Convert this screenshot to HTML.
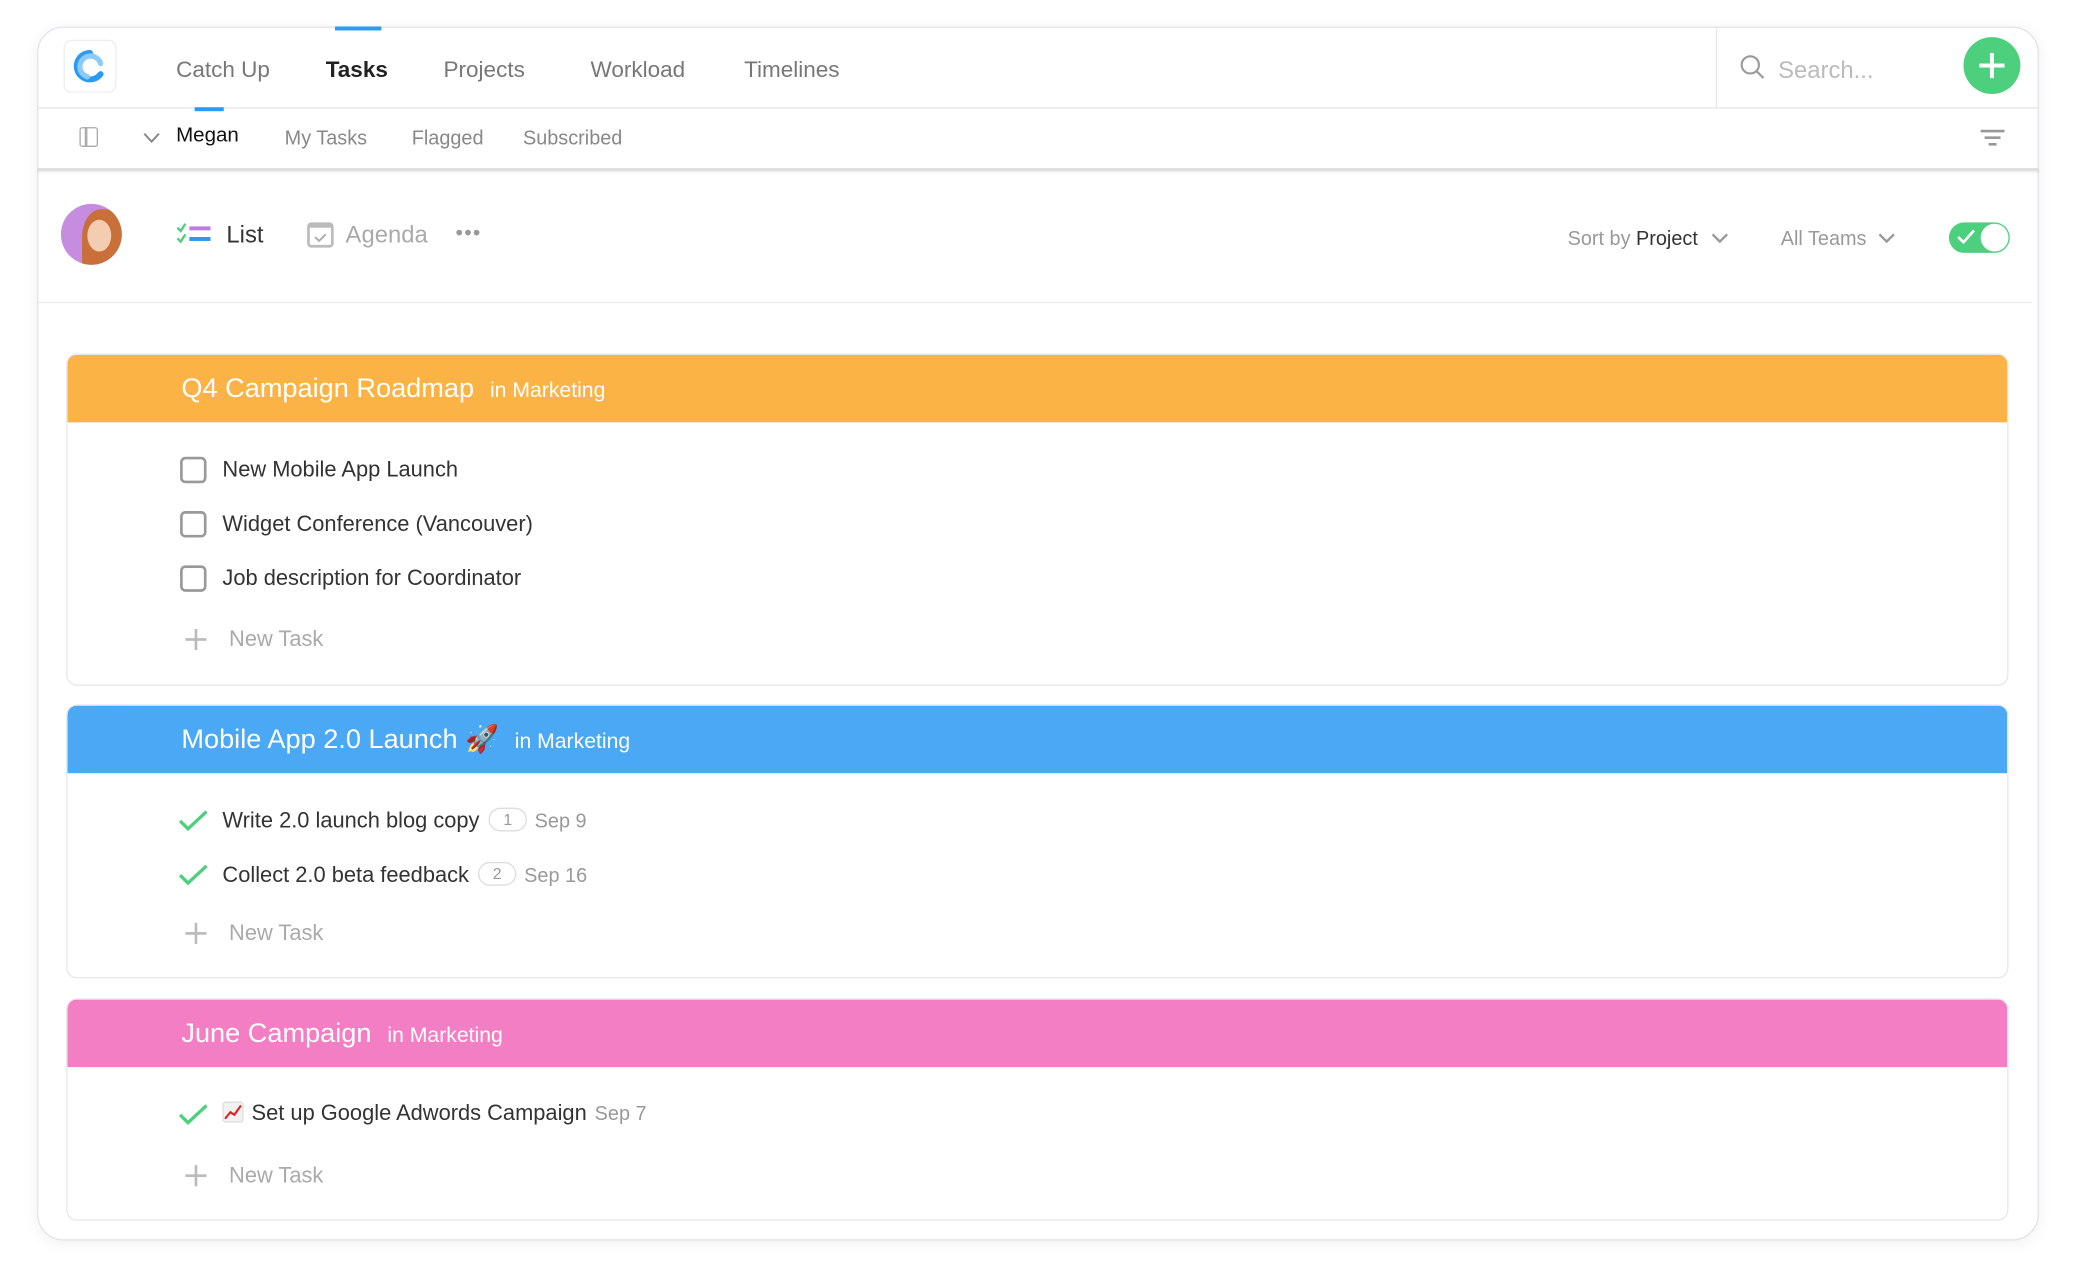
<!DOCTYPE html>
<html><head><meta charset="utf-8"><style>
*{margin:0;padding:0;box-sizing:border-box}
html,body{width:2076px;height:1288px;overflow:hidden;background:#fff}
#w{position:absolute;left:0;top:0;width:1568px;height:973px;transform:scale(1.32398);transform-origin:0 0;font-family:"Liberation Sans",sans-serif}
.a{position:absolute;white-space:nowrap}
.card{left:28px;top:20px;width:1512px;height:917px;border:1px solid #e2e4e7;border-radius:20px;box-shadow:0 2px 12px rgba(0,0,0,.06);background:#fff;overflow:hidden}
.nav{font-size:17px;color:#777;top:43px}
.sub{font-size:15px;color:#888;top:96px}
.sec{left:50px;width:1467px;border:1px solid #e6e8ea;border-radius:8px;overflow:hidden;background:#fff}
.hd{position:absolute;left:0;top:0;width:100%;height:51px}
.hd .t{position:absolute;left:86px;top:14px;font-size:20.5px;color:#fff}
.hd .m{font-size:16px;margin-left:12px}
.task{font-size:16.5px;color:#333;left:168px}
.cb{position:absolute;left:136px;width:20px;height:20px;border:2px solid #999;border-radius:4px}
.nt{font-size:16.5px;color:#aaa;left:173px}
.pl{position:absolute;left:140px;width:16px;height:16px}
.pl:before,.pl:after{content:"";position:absolute;background:#bbb}
.pl:before{left:7px;top:0;width:1.5px;height:16px}.pl:after{top:7px;left:0;height:1.5px;width:16px}
.dt{color:#999;font-size:15px;margin-left:6px}
.bub{display:inline-block;border:1.5px solid #ddd;border-radius:11px;font-size:12px;color:#999;padding:1px 10px;margin-left:7px;vertical-align:2px}
</style></head><body><div id="w">
<div class="a card"></div>
<div class="a" style="left:48px;top:30px;width:40px;height:40px;border:1px solid #eee;border-radius:6px"></div>
<svg class="a" style="left:54px;top:36px" width="28" height="28" viewBox="0 0 28 28"><path d="M14 4a10 10 0 1 0 8 16" fill="none" stroke="#2b9af3" stroke-width="4.5" stroke-linecap="round"/><path d="M12 22a8 8 0 1 1 10-10" fill="none" stroke="#8ccaf9" stroke-width="4" stroke-linecap="round"/></svg>
<div class="a" style="left:253px;top:20px;width:35px;height:3px;background:#2b9af3"></div>
<div class="a nav" style="left:133px">Catch Up</div>
<div class="a nav" style="left:246px;color:#222;font-weight:bold">Tasks</div>
<div class="a nav" style="left:335px">Projects</div>
<div class="a nav" style="left:446px">Workload</div>
<div class="a nav" style="left:562px">Timelines</div>
<div class="a" style="left:1296px;top:20px;width:1px;height:61px;background:#e6e6e6"></div>
<svg class="a" style="left:1314px;top:41px" width="20" height="20" viewBox="0 0 20 20"><circle cx="8" cy="8" r="6.5" fill="none" stroke="#999" stroke-width="1.6"/><path d="M13 13l5 5" stroke="#999" stroke-width="1.6"/></svg>
<div class="a" style="left:1343px;top:43px;font-size:18px;color:#bbb">Search...</div>
<div class="a" style="left:1483px;top:28px;width:43px;height:43px;border-radius:50%;background:#4cd07d"></div>
<div class="a" style="left:1503px;top:40px;width:3px;height:19px;background:#fff"></div>
<div class="a" style="left:1495px;top:48px;width:19px;height:3px;background:#fff"></div>
<div class="a" style="left:28px;top:81px;width:1512px;height:1px;background:#e6e6e6"></div>
<div class="a" style="left:147px;top:81px;width:22px;height:3px;background:#2b9af3"></div>
<div class="a" style="left:60px;top:96px;width:14px;height:15px;border:1.5px solid #aaa;border-radius:2px"></div>
<div class="a" style="left:64px;top:96px;width:1.5px;height:15px;background:#aaa"></div>
<svg class="a" style="left:108px;top:99px" width="13" height="10" viewBox="0 0 13 10"><path d="M1 2l5.5 6L12 2" fill="none" stroke="#888" stroke-width="1.5"/></svg>
<div class="a sub" style="left:133px;top:94px;color:#111;font-size:15.5px">Megan</div>
<div class="a sub" style="left:215px">My Tasks</div>
<div class="a sub" style="left:311px">Flagged</div>
<div class="a sub" style="left:395px">Subscribed</div>
<div class="a" style="left:1496px;top:98px;width:18px;height:2px;background:#999"></div>
<div class="a" style="left:1499px;top:103px;width:12px;height:2px;background:#999"></div>
<div class="a" style="left:1502px;top:108px;width:6px;height:2px;background:#999"></div>
<div class="a" style="left:28px;top:127px;width:1512px;height:2px;background:#ddd;box-shadow:0 1px 2px rgba(0,0,0,.1)"></div>
<div class="a" style="left:46px;top:154px;width:46px;height:46px;border-radius:50%;background:#c58ce0;overflow:hidden"><div style="position:absolute;left:16px;top:4px;width:32px;height:46px;border-radius:45% 45% 10% 10%;background:#c9703a"></div><div style="position:absolute;left:20px;top:12px;width:18px;height:24px;border-radius:50%;background:#f4cdb0"></div></div>
<svg class="a" style="left:133px;top:168px" width="28" height="18" viewBox="0 0 28 18"><path d="M1 4l2.5 2.5L7 1M1 12l2.5 2.5L7 9" fill="none" stroke="#4cd07d" stroke-width="1.8"/><rect x="10" y="3" width="16" height="3" fill="#c07be0"/><rect x="10" y="11" width="16" height="3" fill="#2b9af3"/></svg>
<div class="a" style="left:171px;top:167px;font-size:18px;color:#333">List</div>
<div class="a" style="left:232px;top:168px;width:20px;height:19px;border:2px solid #bbb;border-top-width:4px;border-radius:3px"></div>
<svg class="a" style="left:236px;top:175px" width="12" height="9" viewBox="0 0 12 9"><path d="M2 4l3 3 5-5" fill="none" stroke="#aaa" stroke-width="1.4"/></svg>
<div class="a" style="left:261px;top:167px;font-size:18px;color:#aaa">Agenda</div>
<div class="a" style="left:344px;top:168px;font-size:16px;color:#999;letter-spacing:1px">•••</div>
<div class="a" style="left:1184px;top:172px;font-size:15px;color:#999">Sort by <span style="color:#333">Project</span></div>
<svg class="a" style="left:1292px;top:175px" width="14" height="10" viewBox="0 0 14 10"><path d="M1.5 2l5.5 5.5L12.5 2" fill="none" stroke="#999" stroke-width="1.8"/></svg>
<div class="a" style="left:1345px;top:172px;font-size:15px;color:#999">All Teams</div>
<svg class="a" style="left:1418px;top:175px" width="14" height="10" viewBox="0 0 14 10"><path d="M1.5 2l5.5 5.5L12.5 2" fill="none" stroke="#999" stroke-width="1.8"/></svg>
<div class="a" style="left:1472px;top:168px;width:46px;height:23px;border-radius:12px;background:#4cd07d"></div>
<div class="a" style="left:1496px;top:169px;width:21px;height:21px;border-radius:50%;background:#fff"></div>
<svg class="a" style="left:1477px;top:172px" width="16" height="14" viewBox="0 0 16 14"><path d="M2 7l4 4 8-9" fill="none" stroke="#fff" stroke-width="2"/></svg>
<div class="a" style="left:28px;top:228px;width:1507px;height:1px;background:#eaeaea"></div>

<div class="a sec" style="top:267px;height:251px"><div class="hd" style="background:#fbb346"><div class="t">Q4 Campaign Roadmap<span class="m">in Marketing</span></div></div></div>
<div class="cb" style="top:345px"></div><div class="a task" style="top:346px">New Mobile App Launch</div>
<div class="cb" style="top:386px"></div><div class="a task" style="top:387px">Widget Conference (Vancouver)</div>
<div class="cb" style="top:427px"></div><div class="a task" style="top:428px">Job description for Coordinator</div>
<div class="pl" style="top:475px"></div><div class="a nt" style="top:474px">New Task</div>

<div class="a sec" style="top:532px;height:207px"><div class="hd" style="background:#4aa8f5"><div class="t">Mobile App 2.0 Launch 🚀<span class="m">in Marketing</span></div></div></div>
<svg class="a" style="left:134px;top:611px" width="24" height="18" viewBox="0 0 24 18"><path d="M2 9l6 6L22 2" fill="none" stroke="#4cd07d" stroke-width="2.5"/></svg>
<div class="a task" style="top:610px">Write 2.0 launch blog copy<span class="bub">1</span><span class="dt">Sep 9</span></div>
<svg class="a" style="left:134px;top:652px" width="24" height="18" viewBox="0 0 24 18"><path d="M2 9l6 6L22 2" fill="none" stroke="#4cd07d" stroke-width="2.5"/></svg>
<div class="a task" style="top:651px">Collect 2.0 beta feedback<span class="bub">2</span><span class="dt">Sep 16</span></div>
<div class="pl" style="top:697px"></div><div class="a nt" style="top:696px">New Task</div>

<div class="a sec" style="top:754px;height:168px"><div class="hd" style="background:#f47ec4"><div class="t">June Campaign<span class="m">in Marketing</span></div></div></div>
<svg class="a" style="left:134px;top:833px" width="24" height="18" viewBox="0 0 24 18"><path d="M2 9l6 6L22 2" fill="none" stroke="#4cd07d" stroke-width="2.5"/></svg>
<svg class="a" style="left:168px;top:832px" width="16" height="16" viewBox="0 0 16 16"><rect x="0.5" y="0.5" width="15" height="15" rx="2" fill="#f2f2f2" stroke="#ddd"/><path d="M2 13l4-5 3 2 5-7" fill="none" stroke="#d22" stroke-width="1.6"/></svg>
<div class="a task" style="top:832px;left:190px">Set up Google Adwords Campaign<span class="dt">Sep 7</span></div>
<div class="pl" style="top:880px"></div><div class="a nt" style="top:879px">New Task</div>
</div></body></html>
